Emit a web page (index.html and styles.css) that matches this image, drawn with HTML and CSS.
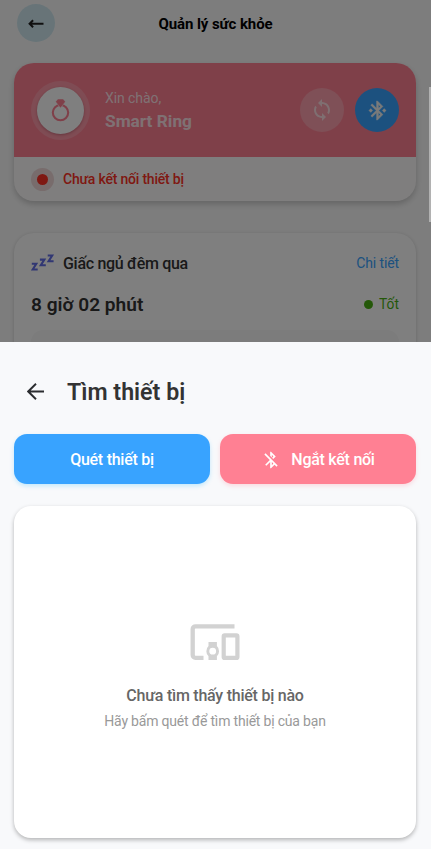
FILE: index.html
```html
<!DOCTYPE html>
<html lang="vi">
<head>
<meta charset="utf-8">
<title>Quản lý sức khỏe</title>
<link rel="stylesheet" href="styles.css">
</head>
<body>
<main class="screen">
  <header class="topbar">
    <div class="back"><svg width="18" height="18" viewBox="0 0 18 18"><path d="M2.500 9.800H16.500M6.100 6.300 2.600 9.800l3.500 3.500" fill="none" stroke="#202020" stroke-width="2"/></svg></div>
    <h1><span class="t-head">Quản lý sức khỏe</span></h1>
  </header>
  <section class="profile">
    <div class="hero">
      <div class="avatar"><div class="avatar-in">
        <svg width="19" height="24" viewBox="0 0 19 24"><circle cx="9.500" cy="14.600" r="7.700" fill="none" stroke="#ff8093" stroke-width="2.100"/><path d="M6.800 1h5.400l2.200 2.800-4.900 6.200L4.600 3.800z" fill="#ff8093" stroke="#fff" stroke-width=".5"/></svg>
      </div></div>
      <div class="who"><div><span class="t-hello">Xin chào,</span></div><div class="name"><span class="t-name">Smart Ring</span></div></div>
      <div class="round sync"><svg width="24" height="24" viewBox="0 0 24 24"><path d="M12 4V1L8 5l4 4V6c3.310 0 6 2.690 6 6 0 1.010-.25 1.970-.7 2.800l1.460 1.460C19.540 15.030 20 13.570 20 12c0-4.420-3.580-8-8-8zm0 14c-3.310 0-6-2.690-6-6 0-1.010.25-1.970.7-2.800L5.240 7.740C4.460 8.970 4 10.430 4 12c0 4.420 3.580 8 8 8v3l4-4-4-4v3z" fill="#fff" fill-opacity=".65"/></svg></div>
      <div class="round bt"><svg width="23" height="23" viewBox="0 0 24 24"><path d="M7 12l-2-2-2 2 2 2 2-2zm10.710-4.290L12 2h-1v7.590L6.410 5 5 6.410 10.590 12 5 17.590 6.410 19 11 14.410V22h1l5.710-5.710-4.300-4.290 4.300-4.290zM13 5.830l1.880 1.880L13 9.590V5.830zm1.880 10.460L13 18.170v-3.760l1.880 1.880zM19 10l-2 2 2 2 2-2-2-2z" fill="#f4f4f4" stroke="#f4f4f4" stroke-width=".4"/></svg></div>
    </div>
    <div class="status"><i class="pulse"></i><span class="t-status">Chưa kết nối thiết bị</span></div>
  </section>
  <section class="sleep">
    <div class="row title">
      <svg width="24" height="18" viewBox="0 0 24 18"><path d="M.8 9.800h4.500L1.700 15.500h5M8.900 5.600h4.500L9.800 11.300h5M16.700 1.500h4.500l-3.600 5.700h5" fill="none" stroke="#626ee6" stroke-width="2.100"/></svg>
      <span class="t-sleep">Giấc ngủ đêm qua</span><a><span class="t-more">Chi tiết</span></a>
    </div>
    <div class="row total"><strong><span class="t-total">8 giờ 02 phút</span></strong><span class="good"><i></i><span class="t-good">Tốt</span></span></div>
    <div class="chart"></div>
  </section>
  <div class="scrollbar"></div>
  <div class="scrim"></div>
</main>
<section class="sheet">
  <header class="sheet-head">
    <svg width="18" height="18" viewBox="0 0 18 18"><path d="M17 8.500H1M9 .8 1.200 8.500l7.800 7.700" fill="none" stroke="#2b2d30" stroke-width="1.900"/></svg>
    <h2><span class="t-sheet">Tìm thiết bị</span></h2>
  </header>
  <div class="actions">
    <button class="scan"><span class="t-scan">Quét thiết bị</span></button>
    <button class="cut"><svg width="20" height="20" viewBox="0 0 24 24"><path d="M13 5.830l1.880 1.880-1.600 1.600 1.410 1.410 3.020-3.020L12 2h-1v5.030l2 2v-3.200zM5.410 4L4 5.410 10.590 12 5 17.590 6.410 19 11 14.410V22h1l4.290-4.290 2.300 2.290L20 18.590 5.410 4zM13 18.170v-3.760l1.880 1.880L13 18.170z" fill="#fff"/></svg><span class="t-cut">Ngắt kết nối</span></button>
  </div>
  <div class="empty">
    <svg width="50" height="38" viewBox="0 0 50 38"><path d="M44.500 2.300H5.500A2.800 2.800 0 0 0 2.700 5v26.100A2.800 2.800 0 0 0 5.500 33.900h8" fill="none" stroke="#d2d2d2" stroke-width="4.300"/><rect x="33.700" y="11.400" width="13.700" height="22.500" rx="1" fill="none" stroke="#d2d2d2" stroke-width="4.200"/><path d="M18.500 18h8.400v4.100a7 7 0 0 1 0 10.100V36h-8.400v-3.800a7 7 0 0 1 0-10.100zM22.700 23.800a3.400 3.400 0 1 0 0 6.800 3.400 3.400 0 0 0 0-6.800z" fill="#d2d2d2" fill-rule="evenodd"/></svg>
    <p class="none"><span class="t-none">Chưa tìm thấy thiết bị nào</span></p>
    <p class="hint"><span class="t-hint">Hãy bấm quét để tìm thiết bị của bạn</span></p>
  </div>
</section>
</body>
</html>
```
FILE: styles.css
```css
* { box-sizing: border-box; }
body { margin: 0; width: 431px; height: 849px; overflow: hidden; font-family: Roboto, sans-serif; background: #f8f9fb; }
h1, h2, p { margin: 0; }
svg { display: block; flex: none; }

.screen { position: relative; height: 342px; overflow: hidden; background: #fbfbfb; }
.scrim { position: absolute; inset: 0; background: rgba(0, 0, 0, .5); }
.scrollbar { position: absolute; right: 0; top: 87px; width: 2px; height: 135px; background: #fff; z-index: 2; opacity: .4; }

.topbar { display: grid; grid-template-columns: 38px 1fr 38px; align-items: center; height: 38px; margin: 4px 17px 0; }
.back { width: 38px; height: 38px; border-radius: 50%; background: #d0e9f1; display: grid; place-items: center; }
h1 { padding-top: 2px; font-size: 15px; letter-spacing: -.09px; line-height: 20px; font-weight: 700; text-align: center; color: #000; }

.profile { margin: 21px 15px 0 14px; height: 138px; border-radius: 20px; overflow: hidden; background: #fefcfc; box-shadow: 0 3px 6px rgba(0, 0, 0, .2); }
.hero { height: 94px; padding: 0 17px; display: flex; align-items: center; background: #ff8093; }
.avatar { width: 59px; height: 59px; border-radius: 50%; display: grid; place-items: center; background: rgba(255, 255, 255, .2); }
.avatar-in { width: 47px; height: 47px; border-radius: 50%; display: grid; place-items: center; background: #fff; box-shadow: 0 1px 3px rgba(80, 0, 20, .3); }
.who { flex: 1; margin-left: 15px; padding-top: 1px; font-size: 14px; line-height: 20px; color: rgba(255, 255, 255, .8); }
.t-hello { letter-spacing: -.08px; }
.name { margin-top: 1px; font-size: 17.3px; line-height: 24px; font-weight: 700; }
.round { width: 44px; height: 44px; border-radius: 50%; display: grid; place-items: center; }
.sync { background: rgba(255, 255, 255, .25); margin-right: 11px; }
.bt { background: #38a3ff; }
.status { display: flex; align-items: center; height: 44px; padding-left: 17px; gap: 9px; font-size: 14px; letter-spacing: -.21px; font-weight: 500; color: #ff3125; }
.pulse { width: 23px; height: 23px; border-radius: 50%; display: grid; place-items: center; background: #f0d9d9; }
.pulse::before { content: ""; width: 11px; height: 11px; border-radius: 50%; background: #ff3125; }

.sleep { margin: 32px 15px 0 14px; height: 140px; padding: 17px 17px 0; border-radius: 20px; background: #fff; box-shadow: 0 1px 4px rgba(0, 0, 0, .18); }
.row { display: flex; align-items: center; }
.title { height: 26px; font-size: 16px; font-weight: 500; color: #333; }
.title > span { margin-left: 8px; letter-spacing: -.3px; }
.title a { margin-left: auto; font-size: 14px; letter-spacing: -.12px; font-weight: 400; color: #38a3ff; }
.total { height: 26px; margin-top: 15px; color: #333; font-size: 19.1px; justify-content: space-between; }
.total strong { font-weight: 600; }
.good { display: flex; align-items: center; gap: 6px; font-size: 13.8px; color: #49b013; }
.good i { width: 9px; height: 9px; border-radius: 50%; background: #49b013; }
.chart { margin-top: 13px; height: 60px; border-radius: 12px; background: #f8f8f8; }

.sheet { height: 507px; padding: 34px 15px 11px 14px; background: #f8f9fb; display: flex; flex-direction: column; }
.sheet-head { height: 32px; display: flex; align-items: center; padding-left: 13px; gap: 22px; }
h2 { font-size: 23.2px; line-height: 32px; font-weight: 600; color: #333; }
.actions { display: grid; grid-template-columns: 1fr 1fr; gap: 10px; margin-top: 26px; height: 50px; }
button { border: 0; border-radius: 13px; font: 500 16px Roboto, sans-serif; letter-spacing: -.26px; color: #fff; display: flex; align-items: center; justify-content: center; gap: 10px; padding: 1px 0 0; }
.scan { background: #38a3ff; box-shadow: 0 2px 4px rgba(56, 190, 255, .28); }
.cut { background: #ff8093; box-shadow: 0 2px 4px rgba(255, 128, 147, .25); }
.empty { flex: 1; margin-top: 22px; border-radius: 17px; background: #fff; box-shadow: 0 2px 4px rgba(0, 0, 0, .28); display: flex; flex-direction: column; align-items: center; padding-top: 118px; }
.none { margin-top: 24px; font-size: 16px; letter-spacing: -.24px; line-height: 20px; font-weight: 500; color: #666; }
.hint { margin-top: 5px; font-size: 14px; letter-spacing: -.19px; line-height: 20px; color: #999; }
```
